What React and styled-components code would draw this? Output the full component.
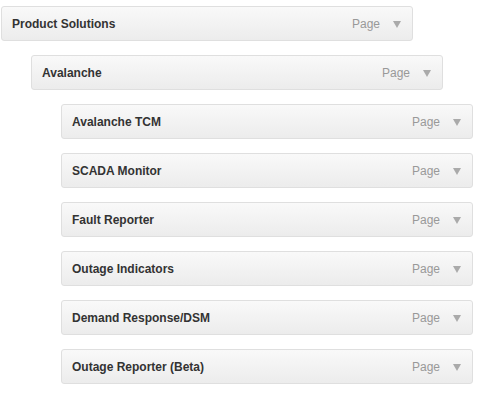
import React from 'react';
import styled, { createGlobalStyle } from 'styled-components';

const GlobalStyle = createGlobalStyle`
  body {
    margin: 0;
    background: #fff;
    font-family: "Liberation Sans", Arial, sans-serif;
  }
`;

const MenuList = styled.ul`
  list-style: none;
  margin: 0;
  padding: 6px 0 0 1px;
`;

const MenuItem = styled.li`
  margin: 0 0 14px ${(p) => p.depth * 30}px;
`;

const ItemBar = styled.div`
  box-sizing: border-box;
  width: 412px;
  height: 35px;
  display: flex;
  align-items: center;
  padding: 0 11px 0 10px;
  border: 1px solid #dfdfdf;
  border-radius: 3px;
  background: linear-gradient(to bottom, #f9f9f9, #ececec);
`;

const Title = styled.span`
  flex: 1;
  font-size: 12px;
  font-weight: bold;
  color: #333;
`;

const ItemType = styled.span`
  font-size: 12px;
  color: #999;
  margin-right: 13px;
`;

const Arrow = styled.span`
  width: 0;
  height: 0;
  border-left: 4px solid transparent;
  border-right: 4px solid transparent;
  border-top: 7px solid #aaa;
  margin-top: 1px;
`;

const items = [
  { title: 'Product Solutions', depth: 0 },
  { title: 'Avalanche', depth: 1 },
  { title: 'Avalanche TCM', depth: 2 },
  { title: 'SCADA Monitor', depth: 2 },
  { title: 'Fault Reporter', depth: 2 },
  { title: 'Outage Indicators', depth: 2 },
  { title: 'Demand Response/DSM', depth: 2 },
  { title: 'Outage Reporter (Beta)', depth: 2 },
];

export default function App() {
  return (
    <>
      <GlobalStyle />
      <MenuList>
        {items.map((item) => (
          <MenuItem key={item.title} depth={item.depth}>
            <ItemBar>
              <Title>{item.title}</Title>
              <ItemType>Page</ItemType>
              <Arrow />
            </ItemBar>
          </MenuItem>
        ))}
      </MenuList>
    </>
  );
}
